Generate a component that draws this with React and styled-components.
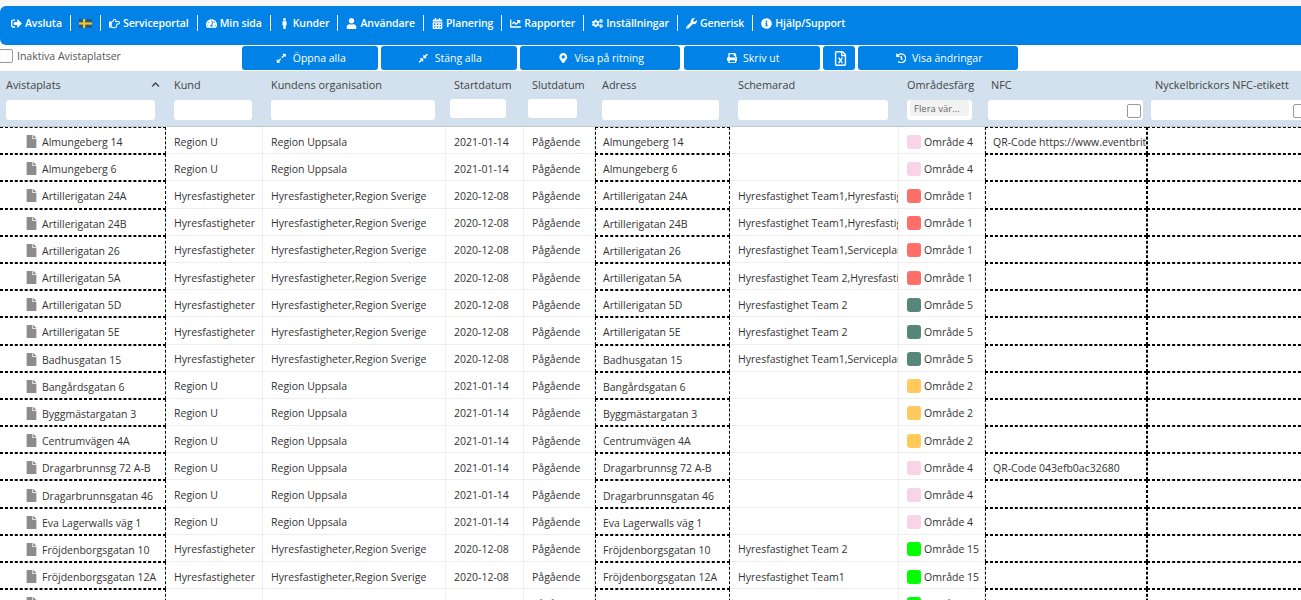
import React from "react";
import styled, { createGlobalStyle } from "styled-components";
import {
  FaSignOutAlt,
  FaRegHandPointRight,
  FaTachometerAlt,
  FaMale,
  FaUser,
  FaCalendarAlt,
  FaChartLine,
  FaCogs,
  FaWrench,
  FaInfoCircle,
  FaExpandAlt,
  FaCompressAlt,
  FaMapMarkerAlt,
  FaPrint,
  FaRegFileExcel,
  FaHistory,
  FaChevronUp,
  FaFile,
} from "react-icons/fa";

const GlobalStyle = createGlobalStyle`
  html, body {
    margin: 0;
    background: #fff;
    font-family: "Open Sans", "Noto Sans", sans-serif;
    font-size: 10.5px;
    color: #333;
  }
`;

const Page = styled.div`
  height: 600px;
  overflow: hidden;
  padding-top: 6px;
  box-sizing: border-box;
  background: linear-gradient(#f6f6f6 6px, #fff 6px);
`;

const NavBar = styled.nav`
  height: 39px;
  box-sizing: border-box;
  padding: 0 0 5px 3px;
  background: #0082e6;
  border-radius: 6px 0 0 6px;
  display: flex;
  align-items: center;
  color: #fff;
  font-weight: 600;
  letter-spacing: -0.08px;
`;

const NavItem = styled.a`
  display: flex;
  align-items: center;
  gap: 3px;
  height: 16px;
  padding: 0 8px;
  border-right: ${(p) => (p.$last ? "none" : "1px solid #fff")};
  white-space: nowrap;
  svg {
    font-size: 11px;
  }
`;

const Actions = styled.div`
  height: 26px;
  display: flex;
  align-items: center;
`;

const InactiveLabel = styled.label`
  width: 243px;
  flex: none;
  display: flex;
  align-items: center;
  gap: 4px;
  margin-left: -1px;
  margin-top: -5px;
  color: #555;
`;

const Box = styled.span`
  display: inline-block;
  flex: none;
  width: 12px;
  height: 12px;
  border: 1px solid #999;
  border-radius: 2px;
  background: #fff;
`;

const ActionButton = styled.button`
  flex: none;
  box-sizing: border-box;
  width: ${(p) => p.$w}px;
  height: 24px;
  margin-right: ${(p) => p.$gap}px;
  padding: 0 0 0 2px;
  border: none;
  border-radius: 3px;
  background: #0082e6;
  color: #fff;
  font: inherit;
  display: flex;
  align-items: center;
  justify-content: center;
  gap: 6px;
`;

const Table = styled.table`
  table-layout: fixed;
  width: 1311px;
  border-collapse: separate;
  border-spacing: 0;
`;

const Head = styled.th`
  height: 56px;
  padding: 0;
  background: #d3e1ee;
  border-bottom: 1px solid #c4c9ce;
  box-sizing: border-box;
  font-size: 10.9px;
  font-weight: 400;
  text-align: left;
  vertical-align: top;
  color: #444;
`;

const HeadTitle = styled.div`
  display: flex;
  justify-content: space-between;
  align-items: center;
  height: 15px;
  margin-top: 6px;
  padding-left: ${(p) => p.$pad}px;
  padding-right: 6px;
  white-space: nowrap;
  overflow: hidden;
  svg {
    font-size: 9px;
    color: #444;
  }
`;

const Filter = styled.div`
  position: relative;
  box-sizing: border-box;
  width: ${(p) => p.$w}px;
  height: ${(p) => p.$h || 20}px;
  margin: ${(p) => p.$top || 8}px 0 0 ${(p) => p.$pad}px;
  background: #fff;
  border-radius: 3px;
`;

const FilterCheck = styled(Box)`
  position: absolute;
  right: 2px;
  top: 4px;
`;

const FilterSelect = styled.div`
  margin: 3px 3px 0;
  height: 16px;
  border-radius: 2px;
  background: #f2f2f2;
  color: #666;
  font-size: 9.5px;
  font-weight: 400;
  line-height: 17px;
  padding-left: 4px;
`;

const Cell = styled.td`
  height: 27.2px;
  padding: 3px 0 0 8px;
  box-sizing: border-box;
  white-space: nowrap;
  overflow: hidden;
  border-right: 1px solid #eee;
  border-bottom: 1px solid #eee;
`;

// the editable cells: each has its own 1px dashed box, so two neighbours read as a 2px line
const DashedCell = styled(Cell)`
  padding-left: 7px;
  border: 1px dashed #000;
`;

const PlaceCell = styled(DashedCell)`
  border-left: none;
  padding-left: 25px;
  svg {
    font-size: 13px;
    color: #8c8c8c;
    margin-right: 4px;
    vertical-align: top;
  }
`;

const AreaInner = styled.div`
  display: flex;
  align-items: center;
  gap: 3px;
`;

const Swatch = styled.span`
  width: 14px;
  height: 14px;
  border-radius: 3px;
  background: ${(p) => p.$color};
`;

const AREA_COLORS = {
  1: "#ff6f69",
  2: "#ffc95c",
  4: "#f9d3e6",
  5: "#56877a",
  15: "#00ff00",
};

const SwedishFlag = () => (
  <svg width="13" height="9" viewBox="0 0 13 9">
    <rect width="13" height="9" fill="#27598c" />
    <rect x="4" width="2.2" height="9" fill="#f5c81e" />
    <rect y="3.4" width="13" height="2.2" fill="#f5c81e" />
  </svg>
);

const NAV = [
  { icon: <FaSignOutAlt />, label: "Avsluta" },
  { icon: <SwedishFlag /> },
  { icon: <FaRegHandPointRight />, label: "Serviceportal" },
  { icon: <FaTachometerAlt />, label: "Min sida" },
  { icon: <FaMale />, label: "Kunder" },
  { icon: <FaUser />, label: "Användare" },
  { icon: <FaCalendarAlt />, label: "Planering" },
  { icon: <FaChartLine />, label: "Rapporter" },
  { icon: <FaCogs />, label: "Inställningar" },
  { icon: <FaWrench />, label: "Generisk" },
  { icon: <FaInfoCircle />, label: "Hjälp/Support" },
];

const BUTTONS = [
  { icon: <FaExpandAlt />, label: "Öppna alla", w: 136, gap: 3 },
  { icon: <FaCompressAlt />, label: "Stäng alla", w: 136, gap: 3 },
  { icon: <FaMapMarkerAlt />, label: "Visa på ritning", w: 160, gap: 4 },
  { icon: <FaPrint />, label: "Skriv ut", w: 136, gap: 3 },
  { icon: <FaRegFileExcel style={{ fontSize: 15 }} />, w: 32, gap: 3 },
  { icon: <FaHistory />, label: "Visa ändringar", w: 160, gap: 0 },
];

const COLUMNS = [
  { title: "Avistaplats", w: 166, pad: 6, fw: 149, fp: 6, sort: true },
  { title: "Kund", w: 97, pad: 8, fw: 78, fp: 8 },
  { title: "Kundens organisation", w: 183, pad: 8, fw: 164, fp: 8 },
  { title: "Startdatum", w: 78, pad: 8, fw: 56, fp: 4, fh: 19, top: 7 },
  { title: "Slutdatum", w: 71, pad: 8, fw: 49, fp: 4, fh: 19, top: 7 },
  { title: "Adress", w: 135, pad: 7, fw: 117, fp: 7 },
  { title: "Schemarad", w: 169, pad: 8, fw: 150, fp: 8 },
  { title: "Områdesfärg", w: 86, pad: 8, fw: 65, fp: 8, select: true },
  { title: "NFC", w: 162, pad: 6, fw: 155, fp: 3, check: true },
  { title: "Nyckelbrickors NFC-etikett", w: 164, pad: 8, fw: 158, fp: 4, check: true },
];

const HF = "Hyresfastigheter";
const HFO = "Hyresfastigheter,Region Sverige";
const T1H = "Hyresfastighet Team1,Hyresfastighet Team 2";
const T1S = "Hyresfastighet Team1,Serviceplan";
const T2 = "Hyresfastighet Team 2";

// place, customer, org, start, schedule, area, nfc
const ROWS = [
  ["Almungeberg 14", "Region U", "Region Uppsala", "2021-01-14", "", 4, "QR-Code https://www.eventbrite.se/e/123"],
  ["Almungeberg 6", "Region U", "Region Uppsala", "2021-01-14", "", 4],
  ["Artillerigatan 24A", HF, HFO, "2020-12-08", T1H, 1],
  ["Artillerigatan 24B", HF, HFO, "2020-12-08", T1H, 1],
  ["Artillerigatan 26", HF, HFO, "2020-12-08", T1S, 1],
  ["Artillerigatan 5A", HF, HFO, "2020-12-08", "Hyresfastighet Team 2,Hyresfastighet Team1", 1],
  ["Artillerigatan 5D", HF, HFO, "2020-12-08", T2, 5],
  ["Artillerigatan 5E", HF, HFO, "2020-12-08", T2, 5],
  ["Badhusgatan 15", HF, HFO, "2020-12-08", T1S, 5],
  ["Bangårdsgatan 6", "Region U", "Region Uppsala", "2021-01-14", "", 2],
  ["Byggmästargatan 3", "Region U", "Region Uppsala", "2021-01-14", "", 2],
  ["Centrumvägen 4A", "Region U", "Region Uppsala", "2021-01-14", "", 2],
  ["Dragarbrunnsg 72 A-B", "Region U", "Region Uppsala", "2021-01-14", "", 4, "QR-Code 043efb0ac32680"],
  ["Dragarbrunnsgatan 46", "Region U", "Region Uppsala", "2021-01-14", "", 4],
  ["Eva Lagerwalls väg 1", "Region U", "Region Uppsala", "2021-01-14", "", 4],
  ["Fröjdenborgsgatan 10", HF, HFO, "2020-12-08", T2, 15],
  ["Fröjdenborgsgatan 12A", HF, HFO, "2020-12-08", "Hyresfastighet Team1", 15],
  ["Fröjdenborgsgatan 14", HF, HFO, "2020-12-08", "Hyresfastighet Team1", 15],
];

export default function App() {
  return (
    <Page>
      <GlobalStyle />
      <NavBar>
        {NAV.map((item, i) => (
          <NavItem key={i} $last={i === NAV.length - 1}>
            {item.icon}
            {item.label}
          </NavItem>
        ))}
      </NavBar>
      <Actions>
        <InactiveLabel>
          <Box />
          Inaktiva Avistaplatser
        </InactiveLabel>
        {BUTTONS.map((b, i) => (
          <ActionButton key={i} $w={b.w} $gap={b.gap}>
            {b.icon}
            {b.label}
          </ActionButton>
        ))}
      </Actions>
      <Table>
        <colgroup>
          {COLUMNS.map((c) => (
            <col key={c.title} style={{ width: c.w }} />
          ))}
        </colgroup>
        <thead>
          <tr>
            {COLUMNS.map((c) => (
              <Head key={c.title}>
                <HeadTitle $pad={c.pad}>
                  {c.title}
                  {c.sort && <FaChevronUp />}
                </HeadTitle>
                <Filter $w={c.fw} $pad={c.fp} $h={c.fh} $top={c.top}>
                  {c.select && <FilterSelect>Flera vär...</FilterSelect>}
                  {c.check && <FilterCheck />}
                </Filter>
              </Head>
            ))}
          </tr>
        </thead>
        <tbody>
          {ROWS.map((r) => (
            <tr key={r[0]}>
              <PlaceCell>
                <FaFile />
                {r[0]}
              </PlaceCell>
              <Cell>{r[1]}</Cell>
              <Cell>{r[2]}</Cell>
              <Cell>{r[3]}</Cell>
              <Cell>Pågående</Cell>
              <DashedCell>{r[0]}</DashedCell>
              <Cell>{r[4]}</Cell>
              <Cell>
                <AreaInner>
                  <Swatch $color={AREA_COLORS[r[5]]} />
                  Område {r[5]}
                </AreaInner>
              </Cell>
              <DashedCell>{r[6]}</DashedCell>
              <DashedCell />
            </tr>
          ))}
        </tbody>
      </Table>
    </Page>
  );
}
